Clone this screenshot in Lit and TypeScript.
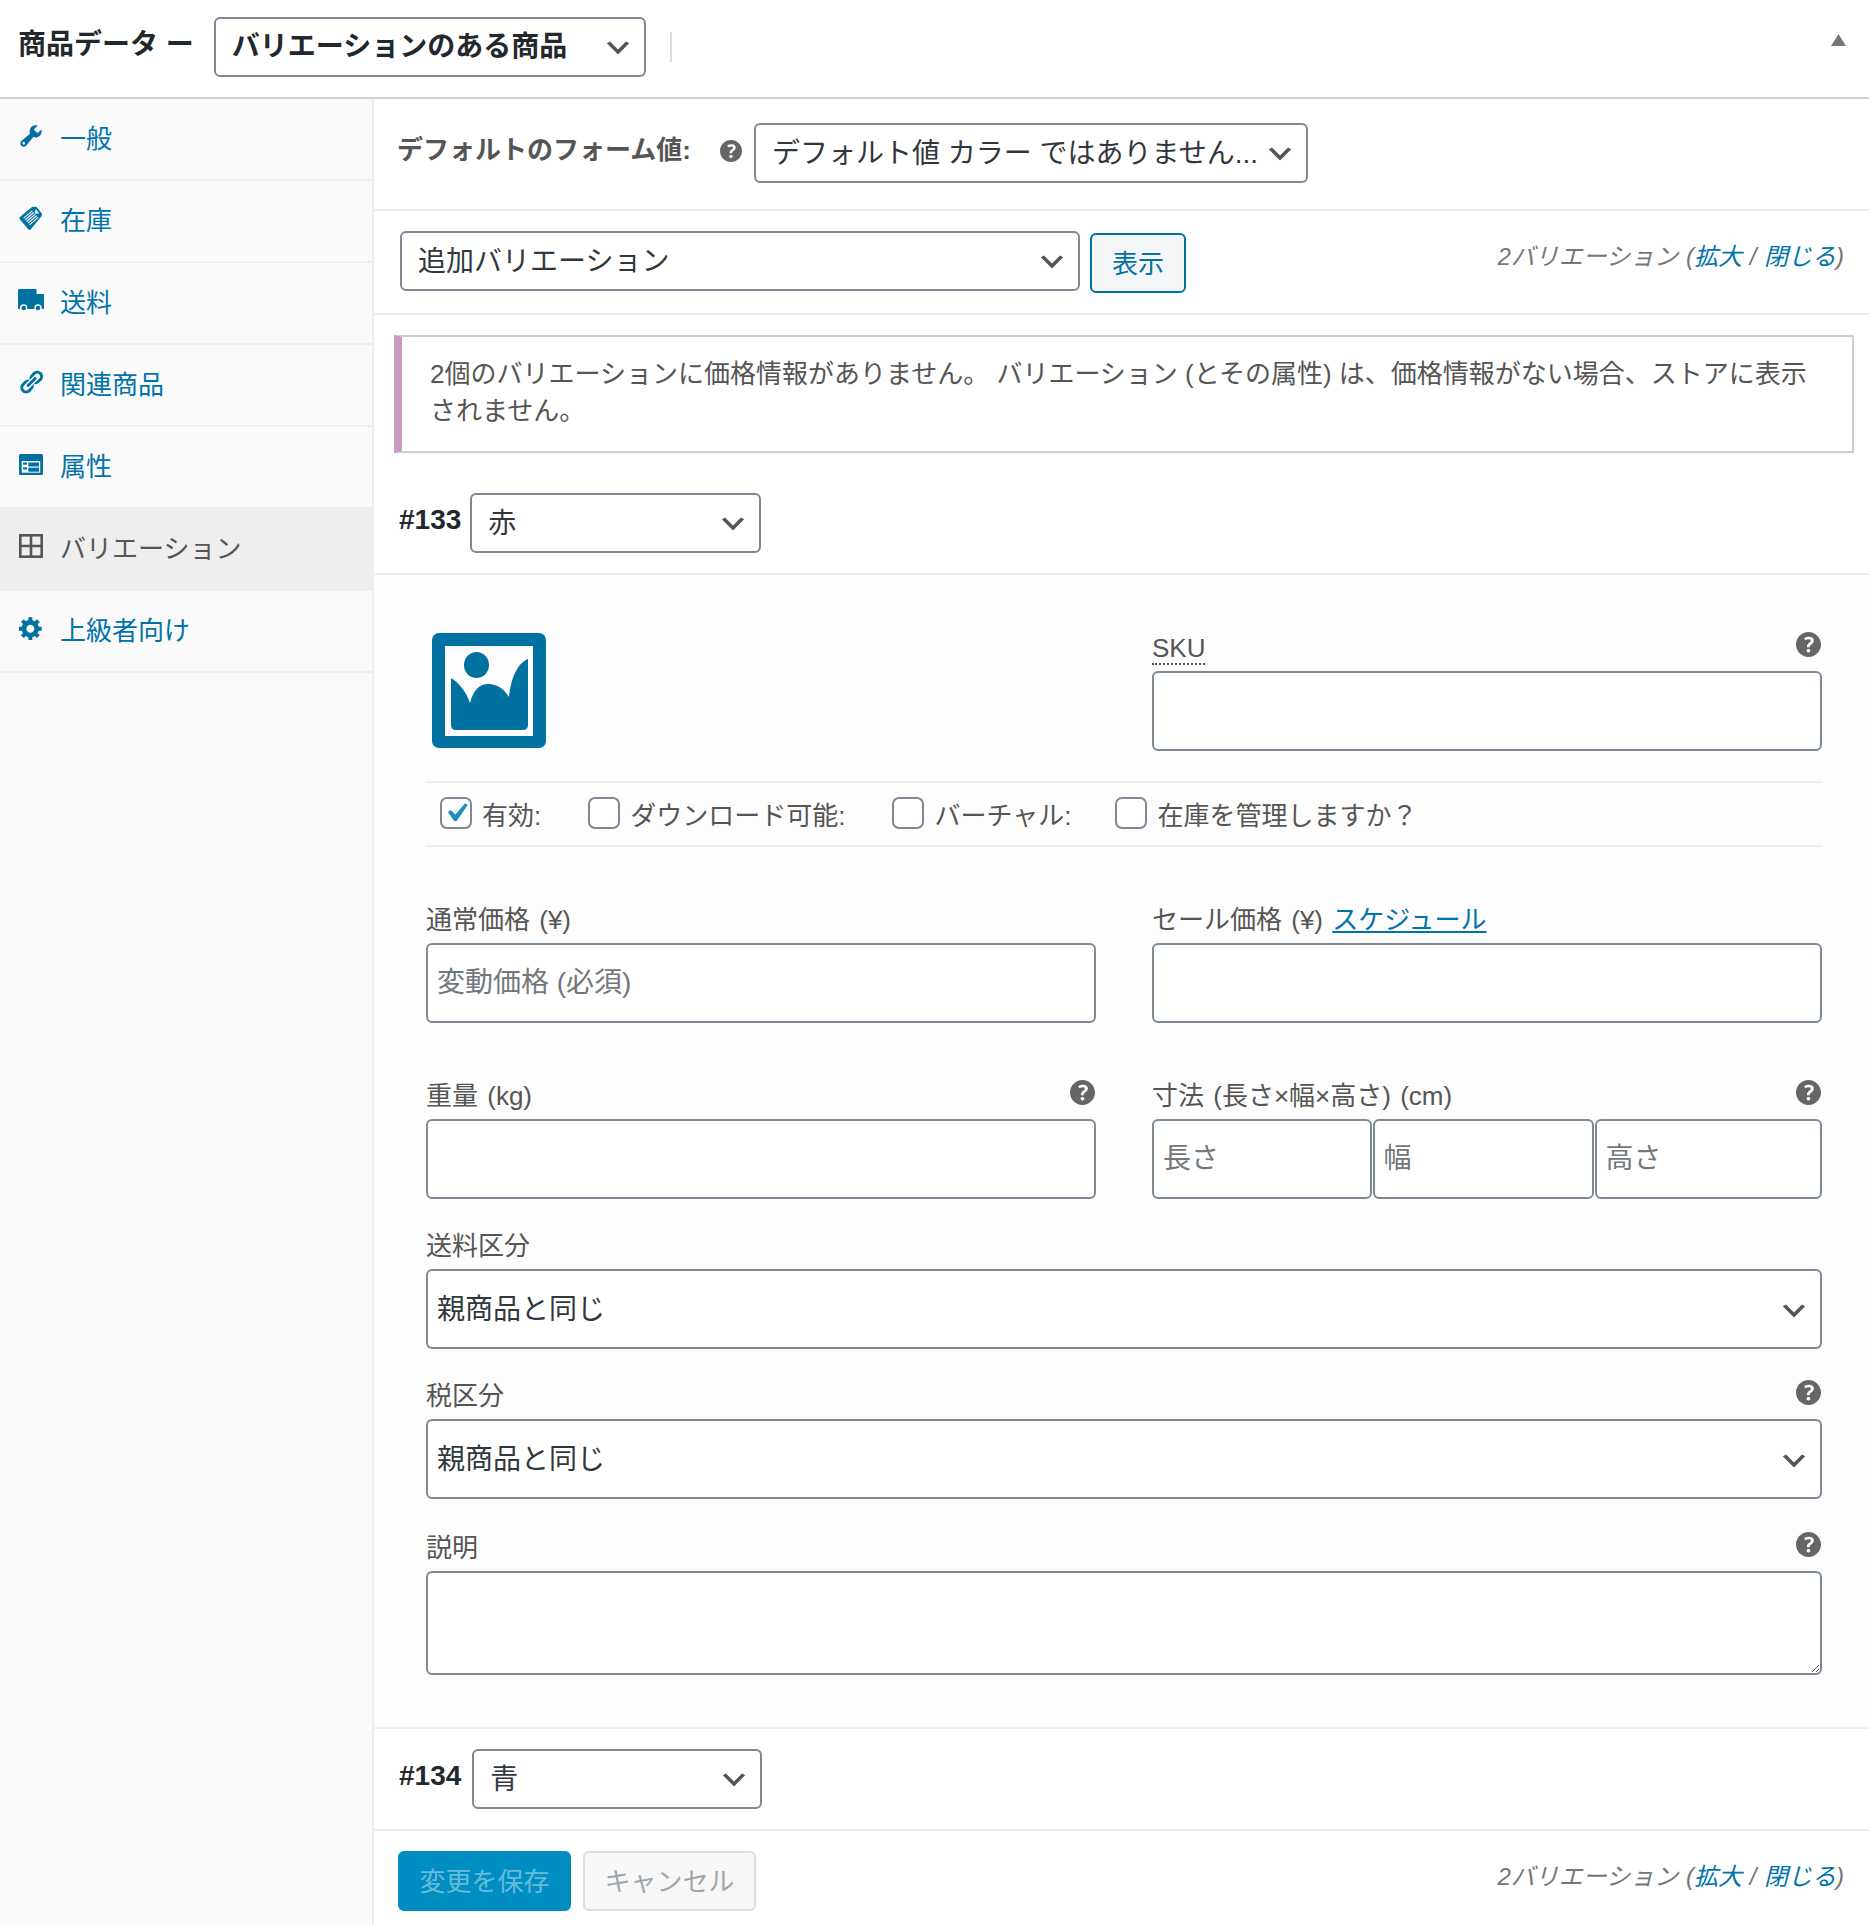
import { LitElement, html, css, svg } from 'lit';
import { customElement } from 'lit/decorators.js';

const ICONS = {
  wrench: svg`<path d="M16.68 9.77c-1.34 1.34-3.3 1.67-4.95.99l-5.41 6.52c-.99.99-2.59.99-3.58 0s-.99-2.59 0-3.57l6.52-5.42c-.68-1.65-.35-3.61.99-4.95 1.28-1.28 3.12-1.62 4.72-1.06l-2.89 2.89 2.82 2.82 2.86-2.87c.53 1.58.18 3.39-1.08 4.67zM3.81 16.21c.4.39 1.04.39 1.43 0 .4-.4.4-1.04 0-1.43-.39-.4-1.03-.4-1.43 0-.39.39-.39 1.03 0 1.43z"/>`,
  link: svg`<path d="M17.74 2.76c1.68 1.69 1.68 4.41 0 6.1l-1.53 1.52c-1.12 1.12-2.7 1.47-4.14 1.09l2.62-2.61.76-.77.76-.76c.84-.84.84-2.2 0-3.04-.84-.85-2.2-.85-3.04 0l-.77.76-3.38 3.38c-.37-1.44-.02-3.02 1.1-4.14l1.52-1.53c1.69-1.68 4.42-1.68 6.1 0zM8.59 13.43l5.34-5.34c.42-.42.42-1.1 0-1.52-.44-.43-1.13-.39-1.53 0l-5.33 5.34c-.42.42-.42 1.1 0 1.52.44.43 1.13.39 1.52 0zm-.76 2.29l4.14-4.15c.38 1.44.03 3.02-1.09 4.14l-1.52 1.53c-1.69 1.68-4.41 1.68-6.1 0-1.68-1.68-1.68-4.42 0-6.1l1.53-1.52c1.12-1.12 2.7-1.47 4.14-1.1l-4.14 4.15c-.85.84-.85 2.2 0 3.05.84.84 2.2.84 3.04 0z"/>`,
  gear: svg`<path d="M18 12h-2.18c-.17.7-.44 1.35-.81 1.93l1.54 1.54-2.1 2.1-1.54-1.54c-.58.36-1.23.63-1.91.79V19H8v-2.18c-.68-.16-1.33-.43-1.91-.79l-1.54 1.54-2.12-2.12 1.54-1.54c-.36-.58-.63-1.23-.79-1.91H1V9.03h2.17c.16-.7.44-1.35.8-1.94L2.43 5.55l2.1-2.1 1.54 1.54c.58-.37 1.24-.64 1.93-.81V2h3v2.18c.68.16 1.33.43 1.91.79l1.54-1.54 2.12 2.12-1.54 1.54c.36.59.64 1.24.8 1.94H18V12zm-8.5 1.5c1.66 0 3-1.34 3-3s-1.34-3-3-3-3 1.34-3 3 1.34 3 3 3z"/>`,
};

const wrench = html`<svg class="ico" viewBox="1 1 18 18">${ICONS.wrench}</svg>`;
const linkIcon = html`<svg class="ico" viewBox="1 1 18 18">${ICONS.link}</svg>`;
const gear = html`<svg class="ico" viewBox="1 1 18 18">${ICONS.gear}</svg>`;

// rotated clipboard / tag
const tag = html`<svg class="ico" viewBox="0 0 26 26">
  <path d="M1 12 14.5 0.8 19 1l6 7.5-.5 2.5L12.5 25.5c-.7.7-1.5.7-2.2 0L1 14.5c-.7-.8-.7-1.8 0-2.5z"/>
  <path d="M18 3.2l4 4.8-5 .2z" fill="#fafafa"/>
  <g stroke="#fafafa" stroke-width="1.2">
    <path d="M5 13.2 14.5 5.2M6.6 15 16 7M8.2 16.8 17.7 8.8M9.8 18.6 19.3 10.6M11.4 20.4 20.9 12.4"/>
  </g>
</svg>`;

const truck = html`<svg class="ico truck" viewBox="0 0 26 22.500">
  <path d="M1.5 0H18.5V5H26V19c0 .6-.4 1-1 1H1c-.6 0-1-.4-1-1V1.500C0 .6.6 0 1.500 0z"/>
  <circle cx="5.700" cy="19" r="3" stroke="#fafafa" stroke-width="1.500"/>
  <circle cx="20" cy="19" r="3" stroke="#fafafa" stroke-width="1.500"/>
</svg>`;

const attrs = html`<svg class="ico attrs" viewBox="0 0 24 21">
  <rect width="24" height="21" rx="1.500"/>
  <rect x="2.700" y="7" width="18.500" height="11.700" fill="#fafafa"/>
  <rect x="4" y="8.500" width="4" height="2.200"/>
  <rect x="4" y="13.300" width="4" height="2.200"/>
  <rect x="9.300" y="8.500" width="10.700" height="4"/>
  <rect x="9.300" y="13.700" width="10.700" height="4"/>
</svg>`;

const gridIcon = html`<svg class="grid-ico" viewBox="0 0 24 24">
  <rect x="1.300" y="1.300" width="21.400" height="21.400"/>
  <path d="M12 1.300V22.700M1.300 12H22.700"/>
</svg>`;

const helpTip = html`<svg class="help" viewBox="3 3 14 14">
  <path d="M17 10c0-3.870-3.140-7-7-7-3.870 0-7 3.130-7 7s3.130 7 7 7c3.860 0 7-3.130 7-7zm-6.300 1.480H9.140v-.43c0-.38.08-.7.24-.98s.46-.57.88-.89c.41-.29.68-.53.81-.71.14-.18.2-.39.2-.62 0-.25-.09-.44-.28-.58-.19-.13-.45-.19-.79-.19-.58 0-1.250.19-2 .57l-.64-1.280c.87-.49 1.800-.74 2.770-.74.81 0 1.450.2 1.920.58.48.39.71.91.71 1.550 0 .43-.09.8-.29 1.110-.19.32-.57.67-1.110 1.060-.38.28-.61.49-.71.63-.1.15-.15.34-.15.57v.35zm-1.470 2.740c-.18-.18-.27-.42-.27-.73 0-.33.08-.58.26-.75s.43-.25.77-.25c.32 0 .57.09.75.26s.27.42.27.74c0 .3-.09.55-.27.72-.18.18-.43.27-.75.27-.33 0-.58-.09-.76-.26z"/>
</svg>`;

const tabs = [
  { label: '一般', icon: wrench },
  { label: '在庫', icon: tag },
  { label: '送料', icon: truck },
  { label: '関連商品', icon: linkIcon },
  { label: '属性', icon: attrs },
  { label: 'バリエーション', icon: gridIcon, active: true },
  { label: '上級者向け', icon: gear },
];

@customElement('app-root')
export class AppRoot extends LitElement {
  private _counts() {
    return html`<span class="counts">2バリエーション (<a>拡大</a> / <a>閉じる</a>)</span>`;
  }

  private _check(label: string, checked = false) {
    return html`<label class="check">
      <input type="checkbox" .checked=${checked} />
      <span>${label}</span>
    </label>`;
  }

  private _field(label: unknown, help: boolean, control: unknown) {
    return html`<div class="field">
      <div class="flabel"><span>${label}</span>${help ? helpTip : ''}</div>
      ${control}
    </div>`;
  }

  private _select(text: string, cls = '') {
    return html`<select class="sel ${cls}"><option>${text}</option></select>`;
  }

  private _sideNav() {
    return html`<nav class="side">
      ${tabs.map(t => html`
        <a class="tab ${t.active ? 'active' : ''}">
          <span class="tab-ico">${t.icon}</span><span class="tab-label">${t.label}</span>
        </a>
      `)}
    </nav>`;
  }

  private _placeholderImage() {
    return html`<svg class="thumb" viewBox="0 0 114 115">
      <rect width="114" height="115" rx="7" fill="#0071a1"/>
      <rect x="13" y="13" width="88" height="90" fill="#fdfdfd"/>
      <ellipse cx="44.500" cy="32" rx="12.500" ry="13" fill="#0071a1"/>
      <path fill="#0071a1" d="M19 45c8 5 15 13 19 25 3-12 9-19 18-19 9 0 16 5 21 13 2-20 9-34 19-38v66c0 3-2 5-5 5H24c-3 0-5-2-5-5z"/>
    </svg>`;
  }

  override render() {
    return html`
      <header class="head">
        <span class="title">商品データ ー</span>
        ${this._select('バリエーションのある商品', 'type')}
        <span class="vsep"></span>
        <svg class="toggle" viewBox="0 0 15 12"><path d="M7.500 0 15 12H0z"/></svg>
      </header>
      <div class="body">
        ${this._sideNav()}
        <main class="main">
          <div class="defaults">
            <strong>デフォルトのフォーム値:</strong>
            ${helpTip}
            ${this._select('デフォルト値 カラー ではありません...', 'dflt')}
          </div>
          <div class="toolbar">
            ${this._select('追加バリエーション', 'add')}
            <button class="btn-go">表示</button>
            ${this._counts()}
          </div>
          <div class="notice">
            2個のバリエーションに価格情報がありません。 バリエーション (とその属性) は、価格情報がない場合、ストアに表示<br />されません。
          </div>
          <div class="var-head first">
            <strong>#133</strong>
            ${this._select('赤', 'color')}
          </div>
          <section class="panel">
            <div class="two top">
              <div class="thumb-wrap">${this._placeholderImage()}</div>
              ${this._field(html`<abbr>SKU</abbr>`, true, html`<input class="inp" />`)}
            </div>
            <div class="opts">
              ${this._check('有効:', true)}
              ${this._check('ダウンロード可能:')}
              ${this._check('バーチャル:')}
              ${this._check('在庫を管理しますか？')}
            </div>
            <div class="two prices">
              ${this._field('通常価格 (¥)', false, html`<input class="inp" placeholder="変動価格 (必須)" />`)}
              ${this._field(html`セール価格 (¥) <a class="sched">スケジュール</a>`, false, html`<input class="inp" />`)}
            </div>
            <div class="two weights">
              ${this._field('重量 (kg)', true, html`<input class="inp" />`)}
              ${this._field('寸法 (長さ×幅×高さ) (cm)', true, html`<div class="dims">
                <input class="inp" placeholder="長さ" />
                <input class="inp" placeholder="幅" />
                <input class="inp" placeholder="高さ" />
              </div>`)}
            </div>
            <div class="ship">${this._field('送料区分', false, this._select('親商品と同じ', 'wide'))}</div>
            <div class="tax">${this._field('税区分', true, this._select('親商品と同じ', 'wide'))}</div>
            <div class="desc">${this._field('説明', true, html`<textarea class="area"></textarea>`)}</div>
          </section>
          <div class="var-head second">
            <strong>#134</strong>
            ${this._select('青', 'color')}
          </div>
          <div class="foot">
            <button class="btn-save" disabled>変更を保存</button>
            <button class="btn-cancel" disabled>キャンセル</button>
            ${this._counts()}
          </div>
        </main>
      </div>
    `;
  }

  static override styles = css`
    :host {
      display: block;
      height: 1925px;
      background: #fff;
      color: #555;
      font-family: "Liberation Sans", "Noto Sans CJK JP", sans-serif;
      font-size: 26px;
      overflow: hidden;
    }

    * {
      box-sizing: border-box;
    }

    .head {
      height: 99px;
      display: flex;
      align-items: center;
      padding: 0 23px 4px 18px;
      border-bottom: 2px solid #ccd0d4;
    }

    .title {
      font-size: 28px;
      font-weight: 700;
      color: #23282d;
      margin: 0 20px 10px 0;
    }

    .vsep {
      width: 2px;
      height: 30px;
      margin-left: 24px;
      background: #ddd;
    }

    .toggle {
      width: 15px;
      height: 12px;
      margin-left: auto;
      margin-bottom: 13px;
      fill: #72777c;
    }

    /* selects */
    .sel {
      appearance: none;
      height: 60px;
      padding: 0 40px 0 16px;
      border: 2px solid #7e8993;
      border-radius: 6px;
      background: #fff url('data:image/svg+xml;charset=US-ASCII,%3Csvg%20width%3D%2220%22%20height%3D%2220%22%20xmlns%3D%22http%3A%2F%2Fwww.w3.org%2F2000%2Fsvg%22%3E%3Cpath%20d%3D%22M5%206l5%205%205-5%202%201-7%207-7-7%202-1z%22%20fill%3D%22%23555%22%2F%3E%3C%2Fsvg%3E') no-repeat right 10px top 55% / 32px 32px;
      font: inherit;
      font-size: 28px;
      color: #32373c;
    }

    .sel.type {
      width: 432px;
      font-weight: 700;
      color: #23282d;
    }

    .sel.dflt {
      width: 554px;
    }

    .sel.add {
      width: 680px;
    }

    .sel.color {
      width: 290px;
    }

    .sel.wide {
      display: block;
      width: 100%;
      height: 80px;
      padding-left: 9px;
    }

    /* sidebar */
    .body {
      display: flex;
      height: 1826px;
    }

    .side {
      flex: 0 0 374px;
      background: #fafafa;
      border-right: 2px solid #eee;
    }

    .tab {
      display: flex;
      align-items: center;
      height: 82px;
      border-bottom: 2px solid #eee;
      color: #0073aa;
      font-size: 26px;
    }

    .tab.active {
      background: #eee;
      color: #555;
      border-bottom-color: #eee;
    }

    .tab-ico {
      flex: 0 0 60px;
      display: flex;
      justify-content: center;
      padding: 0 0 6px 2px;
    }

    .tab-label {
      margin-bottom: 5px;
    }

    .ico {
      width: 24px;
      height: 24px;
      fill: #0071a1;
    }

    .ico.truck {
      width: 26px;
      height: 22.5px;
    }

    .ico.attrs {
      height: 21px;
    }

    .grid-ico {
      width: 24px;
      height: 24px;
      fill: none;
      stroke: #555;
      stroke-width: 2.6;
    }

    .help {
      width: 25px;
      height: 25px;
      fill: #666;
      fill-rule: evenodd;
    }

    /* main column */
    .main {
      flex: 1;
      min-width: 0;
    }

    .defaults {
      display: flex;
      align-items: flex-start;
      padding: 24px 0 26px 23px;
      border-bottom: 2px solid #eee;
    }

    .defaults strong {
      margin-top: 6px;
      width: 323px;
      white-space: nowrap;
    }

    .defaults .help {
      width: 22px;
      height: 22px;
      margin-top: 17px;
      margin-right: 12px;
      flex: none;
    }

    .toolbar {
      display: flex;
      align-items: flex-start;
      height: 104px;
      padding: 20px 25px 0 26px;
      border-bottom: 2px solid #eee;
    }

    .btn-go {
      width: 96px;
      height: 60px;
      margin: 2px 0 0 10px;
      padding-bottom: 5px;
      border: 2px solid #0071a1;
      border-radius: 6px;
      background: #f3f5f6;
      color: #0071a1;
      font: inherit;
    }

    .counts {
      margin-left: auto;
      font-style: italic;
      color: #72777c;
      font-size: 24px;
      word-spacing: 1px;
      white-space: nowrap;
    }

    .toolbar .counts {
      margin-top: 6px;
    }

    .counts a {
      color: #0073aa;
    }

    .notice {
      height: 118px;
      margin: 20px 15px 40px 20px;
      padding: 19px 0 0 28px;
      border: 2px solid #ccd0d4;
      border-left: 8px solid #cc99c2;
      box-shadow: 0 1px 2px rgba(0, 0, 0, 0.04);
      line-height: 37px;
    }

    .var-head {
      display: flex;
      align-items: flex-start;
      gap: 11px;
      padding: 0 0 20px 25px;
      border-bottom: 2px solid #eee;
    }

    .var-head.first {
      gap: 9px;
    }

    .var-head.first .sel {
      width: 291px;
    }

    .var-head strong {
      font-size: 28px;
      color: #23282d;
      line-height: 54px;
    }

    .var-head .sel {
      padding-left: 16px;
    }

    .var-head.second {
      padding-top: 20px;
    }

    .panel {
      height: 1154px;
      padding: 58px 47px 0 52px;
      background: #fdfdfd;
      border-bottom: 2px solid #eee;
    }

    .two {
      display: grid;
      grid-template-columns: 670px 1fr;
      column-gap: 56px;
    }

    .thumb-wrap {
      padding-left: 6px;
    }

    .thumb {
      display: block;
      width: 114px;
      height: 115px;
    }

    .flabel {
      display: flex;
      justify-content: space-between;
      align-items: flex-start;
      height: 36px;
      line-height: 27px;
      word-spacing: 2px;
      white-space: nowrap;
      color: #555;
    }

    .flabel .help {
      margin: -3px 1px 0 0;
      flex: none;
    }

    .flabel abbr {
      display: inline-block;
      border-bottom: 2px dotted #555;
      line-height: 30px;
    }

    .top .flabel {
      height: 38px;
    }

    .top .flabel .help {
      margin-top: -1px;
    }

    .sched {
      color: #0073aa;
      text-decoration: underline;
    }

    .inp {
      display: block;
      width: 100%;
      height: 80px;
      padding: 0 9px;
      border: 2px solid #7e8993;
      border-radius: 6px;
      background: #fff;
      font: inherit;
      font-size: 28px;
      color: #32373c;
    }

    .inp::placeholder {
      color: #72777c;
      opacity: 1;
    }

    .opts {
      display: flex;
      align-items: center;
      height: 66px;
      margin-top: 30px;
      padding-left: 14px;
      border-top: 2px solid #eee;
      border-bottom: 2px solid #eee;
    }

    .check {
      display: flex;
      align-items: center;
      gap: 10px;
      margin-right: 47px;
      white-space: nowrap;
    }

    .check:nth-child(3) {
      margin-right: 44px;
    }

    .check span {
      margin-bottom: 2px;
    }

    .check input {
      appearance: none;
      width: 32px;
      height: 32px;
      margin: 0 0 2px;
      border: 2px solid #7e8993;
      border-radius: 7px;
      background: #fff;
    }

    .check input:checked {
      background: #fff url('data:image/svg+xml;charset=US-ASCII,%3Csvg%20viewBox%3D%220%200%2020%2020%22%20xmlns%3D%22http%3A%2F%2Fwww.w3.org%2F2000%2Fsvg%22%3E%3Cpath%20d%3D%22M14.83%204.89l1.34.94-5.81%208.38H9.02L5.78%209.67l1.34-1.25%202.57%202.4z%22%20fill%3D%22%231e8cbe%22%2F%3E%3C%2Fsvg%3E') no-repeat center / 38px 38px;
    }

    .prices {
      margin-top: 60px;
    }

    .weights {
      margin-top: 60px;
    }

    .dims {
      display: grid;
      grid-template-columns: 219.500px 221px 1fr;
      gap: 1px;
    }

    .ship {
      margin-top: 34px;
    }

    .tax {
      margin-top: 34px;
    }

    .desc {
      margin-top: 36px;
    }

    .area {
      display: block;
      width: 100%;
      height: 104px;
      border: 2px solid #7e8993;
      border-radius: 6px;
      background: #fff;
      padding: 4px 9px;
      font: inherit;
      resize: vertical;
    }

    .foot {
      display: flex;
      align-items: flex-start;
      padding: 20px 25px 0 24px;
    }

    .foot button {
      width: 173px;
      height: 60px;
      padding-bottom: 5px;
      border-radius: 6px;
      font: inherit;
    }

    .btn-save {
      border: 2px solid #008ec2;
      background: #008ec2;
      color: #66bbda;
    }

    .foot .btn-cancel {
      width: 173px;
      margin-left: 12px;
      border: 2px solid #ddd;
      background: #f7f7f7;
      color: #a0a5aa;
    }

    .foot .counts {
      margin-top: 6px;
    }
  `;
}
